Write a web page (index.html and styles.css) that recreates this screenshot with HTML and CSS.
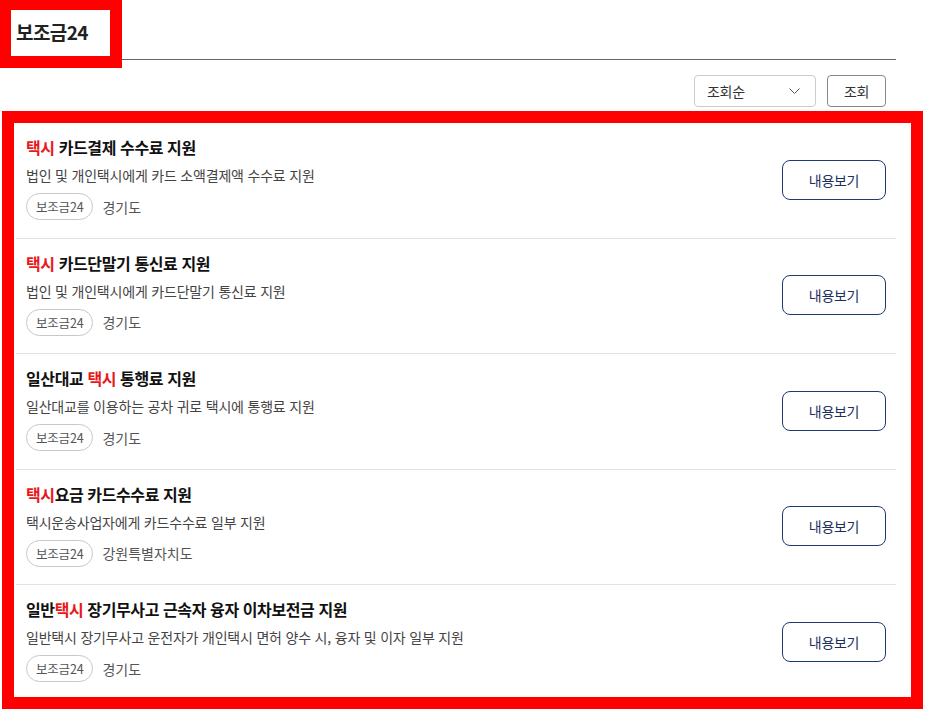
FILE: index.html
```html
<!DOCTYPE html>
<html lang="ko">
<head>
    <meta charset="UTF-8">
    <meta name="viewport" content="width=device-width, initial-scale=1.0">
    <title>보조금24 – 택시 지원사업</title>
    <link rel="stylesheet" href="styles.css">
</head>
<body>
    <div class="container">
        <div class="page-title">
            <h1>보조금24</h1>
        </div>

        <div class="toolbar">
            <div class="select-box">
                <span>조회순</span>
                <svg class="chevron" width="11" height="6" viewBox="0 0 11 6">
                    <path d="M0.5 0.5 L5.5 5.5 L10.5 0.5" fill="none" stroke="#555" stroke-width="1"/>
                </svg>
            </div>
            <button class="btn-search">조회</button>
        </div>

        <ul class="result-list">
            <li class="result-item">
                <div class="result-info">
                    <h2 class="result-title"><em>택시</em> 카드결제 수수료 지원</h2>
                    <p class="result-desc">법인 및 개인택시에게 카드 소액결제액 수수료 지원</p>
                    <div class="result-meta">
                        <span class="tag">보조금24</span>
                        <span class="region">경기도</span>
                    </div>
                </div>
                <button class="btn-detail">내용보기</button>
            </li>
            <li class="result-item">
                <div class="result-info">
                    <h2 class="result-title"><em>택시</em> 카드단말기 통신료 지원</h2>
                    <p class="result-desc">법인 및 개인택시에게 카드단말기 통신료 지원</p>
                    <div class="result-meta">
                        <span class="tag">보조금24</span>
                        <span class="region">경기도</span>
                    </div>
                </div>
                <button class="btn-detail">내용보기</button>
            </li>
            <li class="result-item">
                <div class="result-info">
                    <h2 class="result-title">일산대교 <em>택시</em> 통행료 지원</h2>
                    <p class="result-desc">일산대교를 이용하는 공차 귀로 택시에 통행료 지원</p>
                    <div class="result-meta">
                        <span class="tag">보조금24</span>
                        <span class="region">경기도</span>
                    </div>
                </div>
                <button class="btn-detail">내용보기</button>
            </li>
            <li class="result-item">
                <div class="result-info">
                    <h2 class="result-title"><em>택시</em>요금 카드수수료 지원</h2>
                    <p class="result-desc">택시운송사업자에게 카드수수료 일부 지원</p>
                    <div class="result-meta">
                        <span class="tag">보조금24</span>
                        <span class="region">강원특별자치도</span>
                    </div>
                </div>
                <button class="btn-detail">내용보기</button>
            </li>
            <li class="result-item">
                <div class="result-info">
                    <h2 class="result-title">일반<em>택시</em> 장기무사고 근속자 융자 이차보전금 지원</h2>
                    <p class="result-desc">일반택시 장기무사고 운전자가 개인택시 면허 양수 시, 융자 및 이자 일부 지원</p>
                    <div class="result-meta">
                        <span class="tag">보조금24</span>
                        <span class="region">경기도</span>
                    </div>
                </div>
                <button class="btn-detail">내용보기</button>
            </li>
        </ul>
    </div>

    <!-- 강조 표시 -->
    <div class="highlight highlight-title"></div>
    <div class="highlight highlight-list"></div>
</body>
</html>
```

FILE: styles.css
```css
* {
    margin: 0;
    padding: 0;
    box-sizing: border-box;
}

body {
    font-family: "Noto Sans CJK KR", "Noto Sans", sans-serif;
    background: #fff;
    color: #222;
    position: relative;
    min-height: 712px;
}

.container {
    width: 880px;
    margin-left: 16px;
}

.page-title {
    padding: 17px 0 13px;
    border-bottom: 1px solid #666;
}

.page-title h1 {
    font-size: 19px;
    line-height: 29px;
    font-weight: 700;
    color: #222;
    letter-spacing: -0.6px;
}

.toolbar {
    display: flex;
    justify-content: flex-end;
    gap: 11px;
    padding: 15px 10px 0;
}

.select-box {
    width: 122px;
    height: 32px;
    border: 1px solid #ccc;
    border-radius: 4px;
    display: flex;
    align-items: center;
    justify-content: space-between;
    padding: 0 15px 0 12px;
    font-size: 14px;
    color: #333;
    letter-spacing: -0.3px;
}

.chevron {
    display: block;
}

.btn-search {
    width: 59px;
    height: 32px;
    border: 1px solid #888;
    border-radius: 4px;
    background: #fff;
    font-family: inherit;
    font-size: 14px;
    color: #333;
    letter-spacing: -0.3px;
}

.result-list {
    list-style: none;
    margin-top: 16px;
}

.result-item {
    display: flex;
    align-items: center;
    justify-content: space-between;
    padding: 13px 10px 17.5px;
    border-bottom: 1px solid #e2e2e2;
}

.result-item:last-child {
    border-bottom: none;
}

.result-title {
    font-size: 16px;
    line-height: 22px;
    font-weight: 700;
    color: #111;
    letter-spacing: -0.4px;
}

.result-title em {
    font-style: normal;
    color: #e8191c;
}

.result-desc {
    margin-top: 7px;
    font-size: 14px;
    line-height: 20px;
    color: #444;
    letter-spacing: -0.2px;
}

.result-meta {
    margin-top: 8px;
    display: flex;
    align-items: center;
    gap: 9px;
}

.tag {
    height: 27px;
    padding: 0 9px;
    border: 1px solid #c8c8c8;
    border-radius: 14px;
    display: inline-flex;
    align-items: center;
    font-size: 12.5px;
    color: #555;
    letter-spacing: -0.2px;
}

.region {
    font-size: 14px;
    color: #555;
    letter-spacing: 0;
}

.btn-detail {
    width: 104px;
    height: 40px;
    margin-top: 3px;
    border: 1px solid #1d3a72;
    border-radius: 8px;
    background: #fff;
    font-family: inherit;
    font-size: 14px;
    color: #1d2f5c;
    letter-spacing: -0.3px;
}

.highlight {
    position: absolute;
    border: 12px solid #ff0000;
    pointer-events: none;
}

.highlight-title {
    left: -1px;
    top: -2px;
    width: 123px;
    height: 70px;
}

.highlight-list {
    left: 2px;
    top: 111px;
    width: 921px;
    height: 598px;
}
```
